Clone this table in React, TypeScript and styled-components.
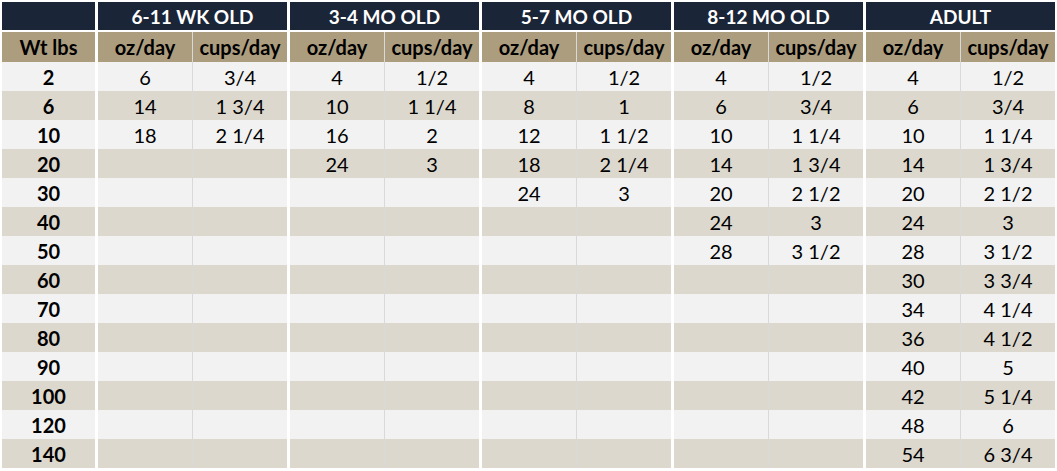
import React from 'react'
import styled, { createGlobalStyle } from 'styled-components'

const GlobalStyle = createGlobalStyle`
    html, body {
        margin: 0;
        padding: 0;
        background: #ffffff;
    }
    body {
        font-family: Lato, 'Open Sans', 'Liberation Sans', sans-serif;
    }
`

const NAVY = '#1b2538'
const TAN = '#ad9d7f'
const LIGHT = '#f2f2f2'
const STRIPE = '#ddd8ce'
const DIVIDER = '#d9d9d9'

const StyledTable = styled.div`
    padding: 2px;
    width: 1053px;
    display: flex;
    flex-direction: column;
`

const Row = styled.div<{ $gapAfter?: boolean }>`
    display: grid;
    grid-template-columns: 93px repeat(5, 189px);
    column-gap: 3px;
    margin-bottom: ${(p) => (p.$gapAfter ? '2px' : '0')};
`

const TitleCell = styled.div`
    background: ${NAVY};
    color: #ffffff;
    height: 28px;
    font-size: 19px;
    font-weight: 700;
    display: flex;
    align-items: center;
    justify-content: center;
`

const Group = styled.div<{ $bg: string; $height: number }>`
    background: ${(p) => p.$bg};
    height: ${(p) => p.$height}px;
    display: grid;
    grid-template-columns: 94px 1px 94px;
`

const Divider = styled.div`
    background: ${DIVIDER};
`

const Cell = styled.div<{ $bold?: boolean; $bg?: string }>`
    background: ${(p) => p.$bg || 'transparent'};
    display: flex;
    align-items: center;
    justify-content: center;
    font-size: 20px;
    font-weight: ${(p) => (p.$bold ? 700 : 400)};
    color: #000000;
`

const groups = ['6-11 WK OLD', '3-4 MO OLD', '5-7 MO OLD', '8-12 MO OLD', 'ADULT']

type Pair = [string, string] | null

const rows: { wt: string; values: Pair[] }[] = [
    { wt: '2', values: [['6', '3/4'], ['4', '1/2'], ['4', '1/2'], ['4', '1/2'], ['4', '1/2']] },
    { wt: '6', values: [['14', '1 3/4'], ['10', '1 1/4'], ['8', '1'], ['6', '3/4'], ['6', '3/4']] },
    { wt: '10', values: [['18', '2 1/4'], ['16', '2'], ['12', '1 1/2'], ['10', '1 1/4'], ['10', '1 1/4']] },
    { wt: '20', values: [null, ['24', '3'], ['18', '2 1/4'], ['14', '1 3/4'], ['14', '1 3/4']] },
    { wt: '30', values: [null, null, ['24', '3'], ['20', '2 1/2'], ['20', '2 1/2']] },
    { wt: '40', values: [null, null, null, ['24', '3'], ['24', '3']] },
    { wt: '50', values: [null, null, null, ['28', '3 1/2'], ['28', '3 1/2']] },
    { wt: '60', values: [null, null, null, null, ['30', '3 3/4']] },
    { wt: '70', values: [null, null, null, null, ['34', '4 1/4']] },
    { wt: '80', values: [null, null, null, null, ['36', '4 1/2']] },
    { wt: '90', values: [null, null, null, null, ['40', '5']] },
    { wt: '100', values: [null, null, null, null, ['42', '5 1/4']] },
    { wt: '120', values: [null, null, null, null, ['48', '6']] },
    { wt: '140', values: [null, null, null, null, ['54', '6 3/4']] },
]

const GroupCells = ({ bg, height, left, right, bold }: { bg: string; height: number; left: string; right: string; bold?: boolean }) => (
    <Group $bg={bg} $height={height}>
        <Cell $bold={bold}>{left}</Cell>
        <Divider />
        <Cell $bold={bold}>{right}</Cell>
    </Group>
)

export default function App() {
    return (
        <>
            <GlobalStyle />
            <StyledTable>
                <Row $gapAfter>
                    <TitleCell />
                    {groups.map((g) => (
                        <TitleCell key={g}>{g}</TitleCell>
                    ))}
                </Row>
                <Row>
                    <Cell $bold $bg={TAN} style={{ height: 30 }}>
                        Wt lbs
                    </Cell>
                    {groups.map((g) => (
                        <GroupCells key={g} bg={TAN} height={30} left="oz/day" right="cups/day" bold />
                    ))}
                </Row>
                {rows.map((r, i) => {
                    const bg = i % 2 === 0 ? LIGHT : STRIPE
                    return (
                        <Row key={r.wt}>
                            <Cell $bold $bg={bg}>
                                {r.wt}
                            </Cell>
                            {r.values.map((v, j) => (
                                <GroupCells key={j} bg={bg} height={29} left={v ? v[0] : ''} right={v ? v[1] : ''} />
                            ))}
                        </Row>
                    )
                })}
            </StyledTable>
        </>
    )
}
